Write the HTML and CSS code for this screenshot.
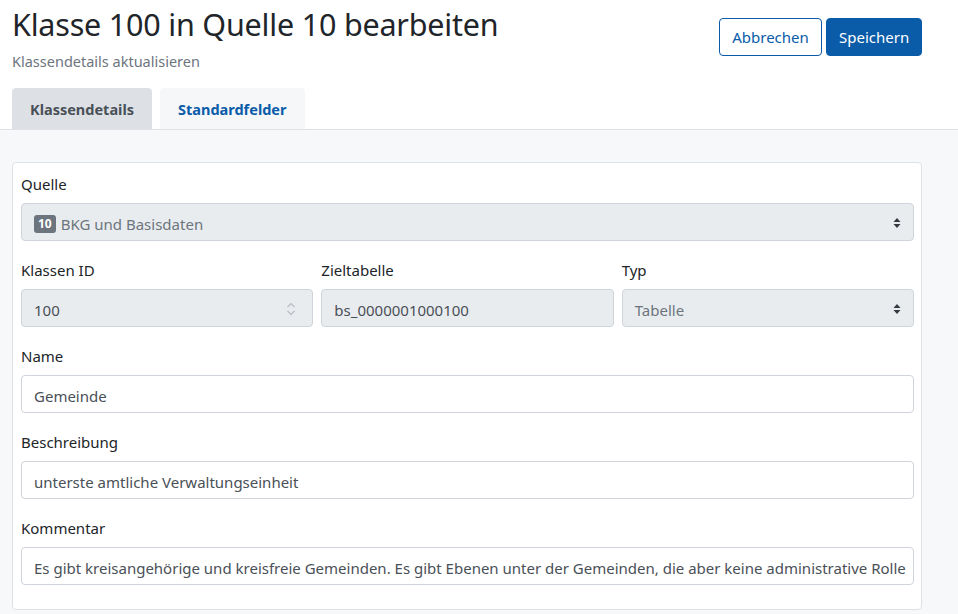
FILE: index.html
```html
<!DOCTYPE html>
<html lang="de">
<head>
  <meta charset="UTF-8">
  <title>Klasse 100 bearbeiten</title>
  <link rel="stylesheet" href="styles.css">
</head>
<body>

  <div class="page-header">
    <div>
      <h1 class="page-title">Klasse 100 in Quelle 10 bearbeiten</h1>
      <div class="page-subtitle">Klassendetails aktualisieren</div>
    </div>
    <div class="header-actions">
      <button class="btn btn-outline">Abbrechen</button>
      <button class="btn btn-primary">Speichern</button>
    </div>
  </div>

  <div class="tabs">
    <div class="tab tab-active">Klassendetails</div>
    <div class="tab">Standardfelder</div>
  </div>

  <div class="content">
    <div class="card">
      <div class="form-group">
        <label class="form-label">Quelle</label>
        <div class="form-control disabled select">
          <span class="badge">10</span>BKG und Basisdaten
          <span class="select-arrows">
            <svg width="8" height="12" viewBox="0 0 8 12"><path d="M4 1 L7.5 5 H0.5 Z M4 11 L0.5 7 H7.5 Z" fill="#343a40"/></svg>
          </span>
        </div>
      </div>

      <div class="form-row">
        <div class="form-group">
          <label class="form-label">Klassen ID</label>
          <div class="form-control disabled value-dark">
            100
            <span class="spinner">
              <svg width="10" height="16" viewBox="0 0 10 16"><path d="M1.5 6 L5 2.5 L8.5 6 M1.5 10 L5 13.5 L8.5 10" fill="none" stroke="#b8bdc2" stroke-width="1.2"/></svg>
            </span>
          </div>
        </div>
        <div class="form-group">
          <label class="form-label">Zieltabelle</label>
          <div class="form-control disabled value-dark">bs_0000001000100</div>
        </div>
        <div class="form-group">
          <label class="form-label">Typ</label>
          <div class="form-control disabled select">
            Tabelle
            <span class="select-arrows">
              <svg width="8" height="12" viewBox="0 0 8 12"><path d="M4 1 L7.5 5 H0.5 Z M4 11 L0.5 7 H7.5 Z" fill="#343a40"/></svg>
            </span>
          </div>
        </div>
      </div>

      <div class="form-group">
        <label class="form-label">Name</label>
        <div class="form-control">Gemeinde</div>
      </div>

      <div class="form-group">
        <label class="form-label">Beschreibung</label>
        <div class="form-control">unterste amtliche Verwaltungseinheit</div>
      </div>

      <div class="form-group">
        <label class="form-label">Kommentar</label>
        <div class="form-control">Es gibt kreisangehörige und kreisfreie Gemeinden. Es gibt Ebenen unter der Gemeinden, die aber keine administrative Rolle</div>
      </div>
    </div>
  </div>

</body>
</html>
```

FILE: styles.css
```css
body {
  margin: 0;
  font-family: "Noto Sans", "Open Sans", sans-serif;
  font-size: 16px;
  color: #212529;
  background-color: #fff;
}

.page-header {
  display: flex;
  justify-content: space-between;
  padding: 0 36px 0 12px;
}

.page-title {
  margin: 2px 0 0 0;
  font-size: 30.5px;
  font-weight: 400;
  line-height: 44px;
  letter-spacing: -0.2px;
}

.page-subtitle {
  margin-top: 5px;
  font-size: 14.5px;
  color: #6c757d;
}

.header-actions {
  display: flex;
  gap: 4px;
  padding-top: 18px;
}

.btn {
  height: 38px;
  padding: 0 12px;
  font-family: inherit;
  font-size: 15px;
  border-radius: 4px;
  cursor: pointer;
}

.btn-outline {
  width: 103px;
  background-color: #fff;
  color: #0a5ba8;
  border: 1px solid #0a5ba8;
}

.btn-primary {
  width: 96px;
  background-color: #0a5ba8;
  color: #fff;
  border: 1px solid #0a5ba8;
}

.tabs {
  display: flex;
  gap: 8px;
  margin-top: 17px;
  padding-left: 12px;
  border-bottom: 1px solid #dee2e6;
}

.tab {
  height: 41px;
  line-height: 43px;
  padding: 0 18px;
  font-size: 14.5px;
  font-weight: 700;
  color: #0a5ba8;
  background-color: #f5f7f9;
  border-radius: 4px 4px 0 0;
}

.tab-active {
  color: #495057;
  background-color: #dde1e6;
}

.content {
  background-color: #f7f8fa;
  padding: 32px 36px 10px 12px;
}

.card {
  background-color: #fff;
  border: 1px solid #dfe2e5;
  border-radius: 4px;
  padding: 8px 7px 8px 8px;
}

.form-row {
  display: grid;
  grid-template-columns: 1fr 1fr 1fr;
  gap: 8px;
}

.form-group {
  margin-bottom: 16px;
}

.card > .form-group:last-child {
  margin-bottom: 16px;
}

.form-label {
  display: block;
  margin-bottom: 7px;
  padding-top: 1px;
  line-height: 24px;
  font-size: 15px;
}

.form-control {
  position: relative;
  display: flex;
  align-items: center;
  height: 38px;
  box-sizing: border-box;
  padding: 3px 12px 0 12px;
  font-size: 15px;
  color: #495057;
  background-color: #fff;
  border: 1px solid #ced4da;
  border-radius: 4px;
  white-space: nowrap;
  overflow: hidden;
}

.form-control.disabled {
  background-color: #e9ecef;
  color: #6c757d;
}

.form-control.value-dark {
  color: #495057;
}

.badge {
  display: inline-block;
  margin-right: 5px;
  padding: 0 4px;
  height: 18px;
  line-height: 18px;
  font-size: 12px;
  font-weight: 700;
  color: #fff;
  background-color: #6c757d;
  border-radius: 3px;
}

.select-arrows {
  position: absolute;
  right: 12px;
  top: 13px;
  display: flex;
}

.spinner {
  position: absolute;
  right: 16px;
  top: 11px;
  display: flex;
}
```
